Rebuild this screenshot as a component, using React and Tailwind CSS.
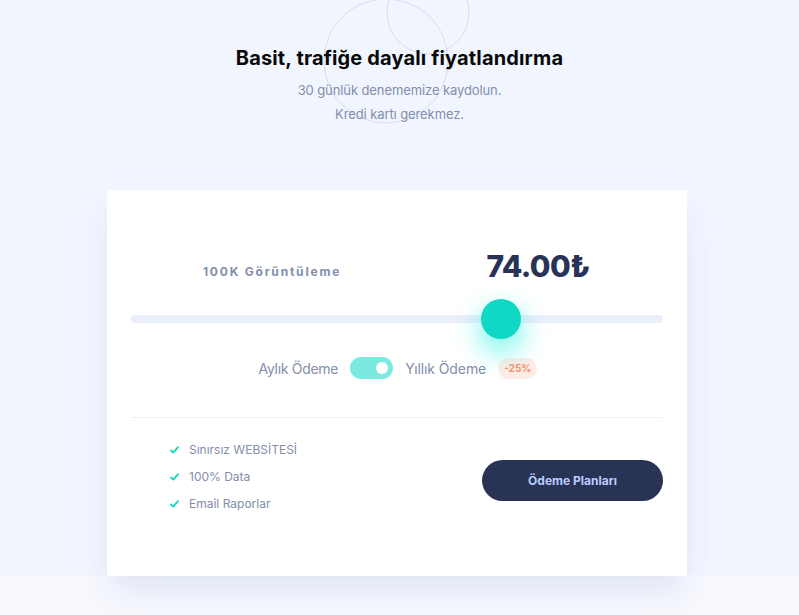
import React from 'react';

const features = ['Sınırsız WEBSİTESİ', '100% Data', 'Email Raporlar'];

function Check() {
  return (
    <svg width="9" height="8" viewBox="0 0 9 8" className="shrink-0">
      <path d="M1 4.5 L3.3 6.6 L8 1.2" fill="none" stroke="#10d8c4" strokeWidth="1.8" strokeLinecap="round" strokeLinejoin="round" />
    </svg>
  );
}

export default function App() {
  return (
    <div className="w-[799px] h-[615px] overflow-hidden bg-[#f1f5fe] relative" style={{ fontFamily: 'Inter, "Noto Sans", sans-serif' }}>
      {/* decorative circles */}
      <svg className="absolute left-0 top-0" width="799" height="140">
        <circle cx="386" cy="61" r="62" fill="none" stroke="#d6dbf3" strokeWidth="1" />
        <circle cx="428" cy="13" r="41" fill="none" stroke="#d6dbf3" strokeWidth="1" />
      </svg>

      <div className="relative flex flex-col items-center">
        <h1 className="mt-[45px] text-[20px] leading-[26px] font-bold text-[#0a0a0a] tracking-[0.15px]">
          Basit, trafiğe dayalı fiyatlandırma
        </h1>
        <p className="mt-[7px] text-[13px] leading-[24px] text-[#848ead] text-center tracking-[-0.1px]">
          30 günlük denememize kaydolun.
          <br />
          Kredi kartı gerekmez.
        </p>
      </div>

      <div className="absolute left-0 right-0 top-[575px] bottom-0 bg-[#f8f9fe]" />

      <div className="relative mt-[64px] ml-[107px] w-[580px] h-[386px] bg-white px-6 pt-[56px] shadow-[0_20px_30px_-5px_rgba(203,211,238,0.55)]">
        <div className="grid grid-cols-2 items-center">
          <div className="text-center text-[12px] font-bold tracking-[1.8px] text-[#848ead] pl-[16px] pt-[12px]">100K Görüntüleme</div>
          <div className="text-center text-[30px] leading-[40px] font-extrabold text-[#293356] tracking-[-0.6px] pl-[16px]">74.00₺</div>
        </div>

        <div className="relative mt-[29px] h-2 rounded-full bg-[#eaeefb]">
          <div className="absolute left-[350px] top-[-16px] w-10 h-10 rounded-full bg-[#10d8c4] shadow-[0_12px_24px_4px_rgba(16,240,222,0.45)]" />
        </div>

        <div className="mt-[34px] flex items-center justify-center gap-3 text-[14px] text-[#848ead] pl-[2px]">
          <span className="tracking-[-0.3px]">Aylık Ödeme</span>
          <div className="w-[43px] h-[22px] rounded-full bg-[#7aeadf] flex items-center justify-end pr-[5px]">
            <div className="w-3 h-3 rounded-full bg-white" />
          </div>
          <span className="tracking-[-0.1px]">Yıllık Ödeme</span>
          <span className="px-[6px] py-[3px] rounded-full bg-[#feece7] text-[#ff8d68] text-[10px] font-bold">-25%</span>
        </div>

        <div className="mt-[38px] h-px bg-[#ecf0fb]" />

        <div className="mt-[23px] flex items-center justify-between">
          <ul className="ml-[39px] flex flex-col gap-[10px]">
            {features.map((f) => (
              <li key={f} className="flex items-center gap-[10px] text-[12px] leading-[17px] text-[#848ead]">
                <Check />
                {f}
              </li>
            ))}
          </ul>
          <button className="mt-[8px] w-[181px] h-[41px] rounded-full bg-[#293356] text-[#bdccff] text-[12px] font-bold">
            Ödeme Planları
          </button>
        </div>
      </div>
    </div>
  );
}
